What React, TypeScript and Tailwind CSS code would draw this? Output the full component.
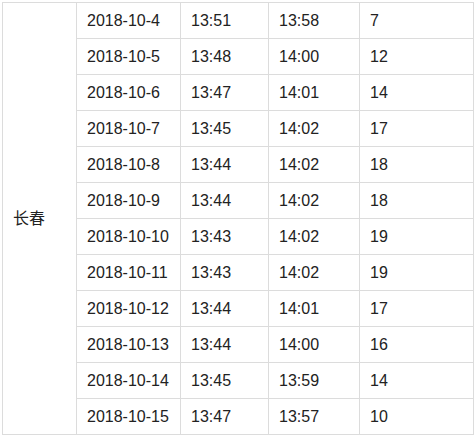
import React from "react";

const rows: [string, string, string, string][] = [
  ["2018-10-4", "13:51", "13:58", "7"],
  ["2018-10-5", "13:48", "14:00", "12"],
  ["2018-10-6", "13:47", "14:01", "14"],
  ["2018-10-7", "13:45", "14:02", "17"],
  ["2018-10-8", "13:44", "14:02", "18"],
  ["2018-10-9", "13:44", "14:02", "18"],
  ["2018-10-10", "13:43", "14:02", "19"],
  ["2018-10-11", "13:43", "14:02", "19"],
  ["2018-10-12", "13:44", "14:01", "17"],
  ["2018-10-13", "13:44", "14:00", "16"],
  ["2018-10-14", "13:45", "13:59", "14"],
  ["2018-10-15", "13:47", "13:57", "10"],
];

export default function App() {
  const td = "border border-[#dcdcdc] pl-[10px] align-middle";
  return (
    <div className="w-[475px] h-[437px] bg-white overflow-hidden pl-[2px] pt-[2px] text-[16px] text-[#222]" style={{ fontFamily: '"Liberation Sans", Arial, "Noto Sans CJK SC", sans-serif' }}>
      <table className="border-collapse table-fixed w-[471px]">
        <colgroup>
          <col className="w-[74px]" />
          <col className="w-[104px]" />
          <col className="w-[88px]" />
          <col className="w-[91px]" />
          <col className="w-[114px]" />
        </colgroup>
        <tbody>
          {rows.map((r, i) => (
            <tr key={i} className="h-[36px]">
              {i === 0 && (
                <td rowSpan={12} className={td}>
                  长春
                </td>
              )}
              {r.map((c, j) => (
                <td key={j} className={td}>
                  {c}
                </td>
              ))}
            </tr>
          ))}
        </tbody>
      </table>
    </div>
  );
}
